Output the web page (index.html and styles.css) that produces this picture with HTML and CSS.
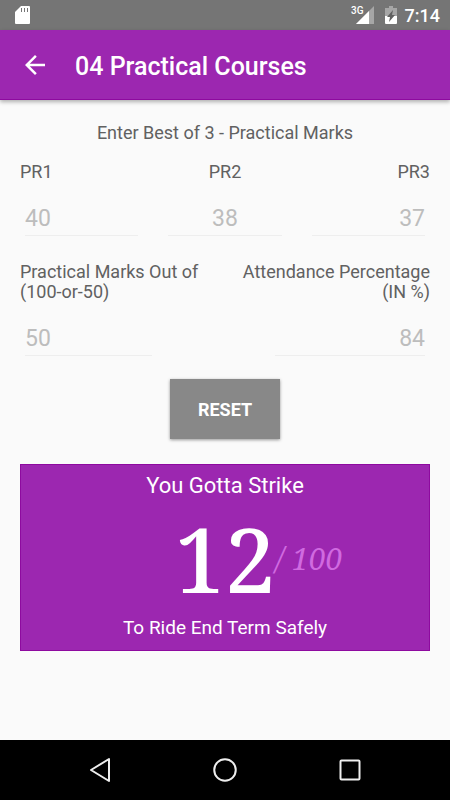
FILE: index.html
```html
<!DOCTYPE html>
<html lang="en">
  <head>
    <meta charset="UTF-8" />
    <meta name="viewport" content="width=device-width, initial-scale=1.0" />
    <title>04 Practical Courses</title>
    <link rel="stylesheet" href="styles.css">
  </head>
  <body>
    <div class="statusbar">
      <svg class="sdcard" width="16" height="20" viewBox="0 0 16 20">
        <path fill="#fff" d="M6 1h8q1 0 1 1v16q0 1-1 1H1q-1 0-1-1V7z" />
        <path fill="#757575" d="M6 3h1v4H6zM9 3h1v4H9zM12 3h1v4h-1z" />
      </svg>
      <div class="status-right">
        <span class="network">3G</span>
        <svg class="signal" width="18" height="18" viewBox="0 0 18 18">
          <path fill="#a6a6a6" d="M18 0v18H0z" />
          <path fill="#fff" d="M13 5v13H0z" />
        </svg>
        <svg class="battery" width="12" height="18" viewBox="0 0 12 18">
          <path fill="#a6a6a6" d="M4 0h4v2h4v8H0V2h4z" />
          <path fill="#fff" d="M0 10h12v7q0 1-1 1H1q-1 0-1-1z" />
          <path fill="#616161" d="M8 4L2 11h3l-1 5 6-7H7z" />
        </svg>
        <span class="time">7:14</span>
      </div>
    </div>

    <header class="toolbar">
      <button class="back" type="button" aria-label="Back">
        <svg width="30" height="30" viewBox="0 0 24 24">
          <path fill="#fff" d="M20 11H7.83l5.59-5.59L12 4l-8 8 8 8 1.41-1.41L7.83 13H20z" />
        </svg>
      </button>
      <h1>04 Practical Courses</h1>
    </header>

    <main>
      <form>
        <p class="hint">Enter Best of 3 - Practical Marks</p>
        <div class="marks">
          <div class="field">
            <label for="pr1">PR1</label>
            <input type="text" id="pr1" placeholder="40" />
          </div>
          <div class="field center">
            <label for="pr2">PR2</label>
            <input type="text" id="pr2" placeholder="38" />
          </div>
          <div class="field right">
            <label for="pr3">PR3</label>
            <input type="text" id="pr3" placeholder="37" />
          </div>
        </div>
        <div class="totals">
          <div class="field">
            <label for="outof">Practical Marks Out of (100-or-50)</label>
            <input type="text" id="outof" placeholder="50" />
          </div>
          <div class="field right">
            <label for="attendance">Attendance Percentage (IN %)</label>
            <input type="text" id="attendance" placeholder="84" />
          </div>
        </div>
        <button class="reset" type="reset">RESET</button>
      </form>

      <section class="result">
        <p class="result-title">You Gotta Strike</p>
        <p class="score"><span class="value">12</span><span class="max">/ 100</span></p>
        <p class="result-note">To Ride End Term Safely</p>
      </section>
    </main>

    <nav class="navbar">
      <button type="button" aria-label="Back">
        <svg width="26" height="26" viewBox="0 0 26 26">
          <path fill="none" stroke="#eee" stroke-width="2" stroke-linejoin="round" d="M22 2v22L4 13z" />
        </svg>
      </button>
      <button type="button" aria-label="Home">
        <svg width="26" height="26" viewBox="0 0 26 26">
          <circle cx="13" cy="13" r="10.75" fill="none" stroke="#eee" stroke-width="2" />
        </svg>
      </button>
      <button type="button" aria-label="Recent apps">
        <svg width="26" height="26" viewBox="0 0 26 26">
          <rect x="3.5" y="3.5" width="19" height="19" rx="1" fill="none" stroke="#eee" stroke-width="2" />
        </svg>
      </button>
    </nav>
  </body>
</html>
```

FILE: styles.css
```css
* {
  box-sizing: border-box;
}

body {
  display: flex;
  flex-direction: column;
  min-height: 100vh;
  margin: 0;
  background-color: #fafafa;
  color: #616161;
  font-family: Roboto, "Liberation Sans", sans-serif;
  font-size: 18px;
}

p,
h1 {
  margin: 0;
}

button {
  border: none;
  padding: 0;
  background: none;
  font-family: inherit;
  cursor: pointer;
}

svg {
  display: block;
}

.statusbar {
  display: flex;
  align-items: center;
  justify-content: space-between;
  height: 30px;
  padding: 0 10px 0 15px;
  background-color: #757575;
  color: #fff;
}

.status-right {
  display: flex;
  align-items: center;
}

.network {
  align-self: flex-start;
  font-size: 10px;
  font-weight: 500;
  line-height: 12px;
}

.signal {
  margin-left: -8px;
}

.battery {
  margin: 0 8px 0 11px;
}

.time {
  font-size: 18px;
  font-weight: 500;
}

.toolbar {
  display: flex;
  align-items: center;
  gap: 25px;
  height: 70px;
  padding: 0 20px;
  background-color: #9c27b0;
  border-bottom: 1px solid #8e0a9f;
  box-shadow: 0 2px 4px rgba(0, 0, 0, 0.3);
  color: #fff;
}

.toolbar h1 {
  padding-top: 4px;
  font-size: 25px;
  font-weight: 500;
}

main {
  flex: 1;
  padding: 20px;
}

form {
  display: flex;
  flex-direction: column;
  line-height: 20px;
}

.hint {
  padding: 3px 0 19px;
  text-align: center;
}

.marks {
  display: grid;
  grid-template-columns: repeat(3, 1fr);
  gap: 20px;
}

.totals {
  display: grid;
  grid-template-columns: 1fr 1fr;
  padding-top: 21px;
}

.field {
  display: flex;
  flex-direction: column;
  padding: 0 5px;
}

.field label {
  margin: 0 -5px;
}

.field input {
  width: 100%;
  height: 40px;
  margin: 14px 0 5px;
  padding: 10px 0 5px;
  border: none;
  border-bottom: 1px solid #eee;
  background: none;
  color: #616161;
  font-family: inherit;
  font-size: 23px;
  text-align: inherit;
}

.field input::placeholder {
  color: #bdbdbd;
}

.totals input {
  width: 65%;
}

.totals .right input {
  width: 77%;
}

.center {
  text-align: center;
}

.right {
  align-items: flex-end;
  text-align: right;
}

.reset {
  align-self: center;
  width: 110px;
  height: 60px;
  margin: 18px 0 25px;
  background-color: #888;
  box-shadow: 0 1px 3px rgba(0, 0, 0, 0.4);
  color: #fff;
  font-size: 18px;
  font-weight: 700;
}

.result {
  padding: 8px 0 11px;
  background-color: #9c27b0;
  border: 1px solid #8e0a9f;
  color: #fff;
  text-align: center;
}

.result-title {
  font-size: 22px;
  line-height: 26px;
}

.score {
  display: grid;
  grid-template-columns: 1fr auto 1fr;
  align-items: center;
  height: 118px;
  font-family: "Noto Serif", "Droid Serif", "Liberation Serif", serif;
  text-align: left;
}

.value {
  grid-column: 2;
  font-size: 90px;
  font-weight: 500;
  line-height: 118px;
}

.max {
  color: #d06ae0;
  font-size: 30px;
  font-style: italic;
}

.result-note {
  font-size: 19px;
  line-height: 22px;
}

.navbar {
  display: flex;
  justify-content: center;
  gap: 65px;
  height: 60px;
  background-color: #000;
}

.navbar button {
  display: flex;
  align-items: center;
  justify-content: center;
  width: 60px;
}
```
